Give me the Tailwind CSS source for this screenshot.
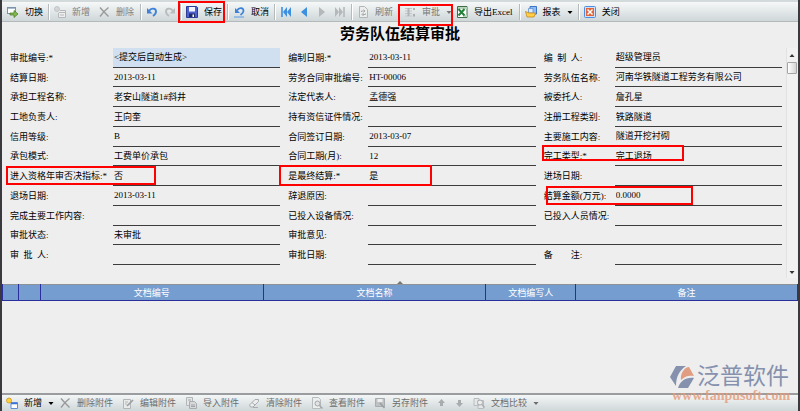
<!DOCTYPE html>
<html lang="zh-CN">
<head>
    <meta charset="UTF-8">
    <meta name="viewport" content="width=device-width, initial-scale=1.0">
    <title>劳务队伍结算审批</title>
    <script src="https://cdn.jsdelivr.net/npm/@tailwindcss/browser@4"></script>
</head>
<body class="bg-[#eeeeee] font-['Liberation_Serif','Noto_Sans_CJK_SC',sans-serif] text-[9px] leading-3 text-black">

    <!-- Icons -->
    <svg class="hidden">
        <symbol id="i-switch" viewBox="0 0 12 12"><rect x="0.5" y="1.5" width="8" height="6" fill="#fff" stroke="#7d92a8"/><path d="M1 2.5h7" stroke="#a9bccd"/><path d="M3 7h4V4.5L11 8l-4 3.5V9H3z" fill="#86b84a" stroke="#41762a" stroke-width=".7"/></symbol>
        <symbol id="i-new" viewBox="0 0 12 12"><path d="M6 4.5h5.5v7H4.5V7" fill="#eee" stroke="#b4b8bb"/><path d="M5 6.500h6M6 9h4" stroke="#b4b8bb"/><circle cx="3" cy="3" r="2.500" fill="#d4d6d8" stroke="#b0b4b8" stroke-width=".6"/></symbol>
        <symbol id="i-newc" viewBox="0 0 12 12"><path d="M5 5.500h6.500v6H5z" fill="#fff" stroke="#5f8fd6"/><path d="M5 6.500h6.500" stroke="#3a74d0" stroke-width="1.500"/><circle cx="3" cy="3.500" r="2.500" fill="#ffd23c" stroke="#c98a12" stroke-width=".7"/></symbol>
        <symbol id="i-x" viewBox="0 0 12 12"><path d="M2 1.500Q5 5 10.500 10.500M10.500 1.500Q6 5 2 10.500" fill="none" stroke="#9a9a9a" stroke-width="1.400"/></symbol>
        <symbol id="i-undo" viewBox="0 0 12 12"><path d="M3 5C5 1.500 10 2 10 5.500c0 2-1.500 3.500-3 4.500" fill="none" stroke="#3d82d8" stroke-width="1.900"/><path d="M1 2v5.500h5.500z" fill="#3d82d8"/></symbol>
        <symbol id="i-redo" viewBox="0 0 12 12"><path d="M9 5C7 1.500 2 2 2 5.500c0 2 1.500 3.500 3 4.500" fill="none" stroke="#b9bcbe" stroke-width="1.900"/><path d="M11 2v5.500H5.500z" fill="#b9bcbe"/></symbol>
        <symbol id="i-cancel" viewBox="0 0 12 12"><path d="M4 4.500C6 1 10.500 1.500 10.500 5c0 2-1.500 3-3 4" fill="none" stroke="#3d82d8" stroke-width="1.700"/><path d="M2 2v5h5z" fill="#3d82d8"/><path d="M1 11h10" stroke="#6fa6e6" stroke-width="1.200"/></symbol>
        <symbol id="i-save" viewBox="0 0 12 12"><path d="M.5.5h10l1 1v10H.5z" fill="#4d62cf" stroke="#2c3b98"/><path d="M3 1h6v4.500H3z" fill="#f2f5ff"/><path d="M3 7.500h6V11H3z" fill="#1f2b66"/><path d="M6.500 8.500h1.500V11H6.500z" fill="#fff"/></symbol>
        <symbol id="i-first" viewBox="0 0 12 12"><path d="M2 1v10" stroke="#3d8fe0" stroke-width="1.600"/><path d="M7 1v10L3 6zM11 1v10L7 6z" fill="#3d8fe0"/></symbol>
        <symbol id="i-prev" viewBox="0 0 12 12"><path d="M9 1v10L3 6z" fill="#3d8fe0"/></symbol>
        <symbol id="i-next" viewBox="0 0 12 12"><path d="M3 1v10l6-5z" fill="#b5b8ba"/></symbol>
        <symbol id="i-last" viewBox="0 0 12 12"><path d="M10 1v10" stroke="#b5b8ba" stroke-width="1.600"/><path d="M1 1v10l4-5zM5 1v10l4-5z" fill="#b5b8ba"/></symbol>
        <symbol id="i-refresh" viewBox="0 0 12 12"><path d="M2.500.5h5l3 3v8h-8z" fill="#eceeee" stroke="#b3b6b8"/><path d="M4.500 6V5h3M6.500 3.500 8 5 6.500 6.500M8.500 7.500v1h-3M6.500 7 5 8.500 6.500 10" fill="none" stroke="#9da1a3" stroke-width=".9"/></symbol>
        <symbol id="i-approve" viewBox="0 0 12 12"><path d="M1 2.500h7M1 5h7M1 7.500h7M1 10h7" stroke="#c3c6c8" stroke-width="1.200"/><path d="M4.500 2v8" stroke="#b1b4b6" stroke-width="2"/><path d="M10 2v2M10 8v2.500" stroke="#999" stroke-width="1.400"/></symbol>
        <symbol id="i-excel" viewBox="0 0 12 12"><path d="M1.500.5h9.500v11H1.500z" fill="#fff" stroke="#3e6e46"/><path d="M2 1h9v2H2zM7 9h4v2H7z" fill="#b8d5bb"/><path d="m2.500 3 6 6.500M8.500 3l-6 6.500" stroke="#23803a" stroke-width="2"/></symbol>
        <symbol id="i-report" viewBox="0 0 12 12"><path d="M5 .5h6.500V8H5z" fill="#8fbcf4" stroke="#3d74c4"/><path d="M3.500 2.500H8V7H3.500z" fill="#dbe9fb" stroke="#5f8fd6" stroke-width=".8"/><path d="M.5 5.500 4 7h6.500L9 11H2z" fill="#ffcf4a" stroke="#c58a1a" stroke-width=".8"/></symbol>
        <symbol id="i-close" viewBox="0 0 12 12"><rect x=".5" y=".5" width="11" height="11" rx="1" fill="#cfe2fa" stroke="#4f8ce0"/><path d="M2 2h8v8H2z" fill="#e2643a"/><path d="m3.500 3.500 5 5M8.500 3.500l-5 5" stroke="#fff" stroke-width="1.500"/></symbol>
        <symbol id="i-edit" viewBox="0 0 12 12"><path d="M1.500 2.500h7v9h-7z" fill="#e9ebeb" stroke="#b3b6b8"/><path d="M3 5h3M3 7h2" stroke="#b3b6b8"/><path d="m5 9 6-6" stroke="#9c9fa1" stroke-width="1.700"/></symbol>
        <symbol id="i-import" viewBox="0 0 12 12"><path d="M1.500.5h6v8h-6z" fill="#e4e6e7" stroke="#b3b6b8"/><path d="M4.500 4.500h5l2 2v5h-7z" fill="#d6d8da" stroke="#a9acae"/><path d="M3 3h3M6 8h4M6 9.500h4" stroke="#a2a5a7"/></symbol>
        <symbol id="i-clear" viewBox="0 0 12 12"><path d="m1.500 8 5.500-5.500h3.500v2L5 10H2.500z" fill="#eceeee" stroke="#a9acae"/><path d="M5 10.500h5M4 5.500l3 2.500" stroke="#a9acae"/></symbol>
        <symbol id="i-view" viewBox="0 0 12 12"><path d="M1.500.5h6l2 2v9h-8z" fill="#eceeee" stroke="#b9bcbe"/><circle cx="6.500" cy="6.500" r="2.500" fill="#dfe3e5" stroke="#a5a8aa"/><path d="m8.500 8.500 3 3" stroke="#a5a8aa" stroke-width="1.500"/></symbol>
        <symbol id="i-saveas" viewBox="0 0 12 12"><path d="M1.500 1.500h9v8h-9z" fill="#bfc2c4" stroke="#a9acae"/><path d="M3.500 2h5v3h-5z" fill="#eee"/><path d="m6 6 4.500 5" stroke="#9a9d9f" stroke-width="1.500"/></symbol>
        <symbol id="i-up" viewBox="0 0 9 12"><path d="M4.500 2 8 6H6v3H3V6H1z" fill="#a9acae"/></symbol>
        <symbol id="i-down" viewBox="0 0 9 12"><path d="M4.500 10 8 6H6V3H3v3H1z" fill="#a9acae"/></symbol>
        <symbol id="i-compare" viewBox="0 0 12 12"><path d="M1 1.500h5v7H1zM5 3.500h5.500v8H5z" fill="#e4e6e7" stroke="#b9bcbe"/><circle cx="7" cy="5.500" r="2.500" fill="#eceeee" stroke="#a9acae"/><path d="m9 7.500 2.500 3" stroke="#a9acae" stroke-width="1.300"/></symbol>
        <symbol id="i-caret" viewBox="0 0 6 12"><path d="M.5 5h5L3 8z" fill="currentColor"/></symbol>
    </svg>

    <div class="relative flex min-h-screen flex-col border-r-2 border-l-2 border-[#3a3a3e]">

        <!-- Toolbar -->
        <header class="flex h-[22px] items-center border-t-2 border-b border-t-[#d3dadc] border-b-[#b4babc] bg-linear-to-b from-[#f6f8f8] to-[#cfd7d9] pl-px whitespace-nowrap">
            <div class="flex items-center pr-[5px] pl-1">
                <button class="flex items-center gap-1.5"><svg class="size-3"><use href="#i-switch"/></svg>切换</button>
            </div>
            <i class="h-4 w-0.5 border-r border-l border-r-white border-l-[#b5bbbd]"></i>
            <div class="flex items-center gap-2 pr-1.5 pl-1 text-[#808080]">
                <button class="flex items-center gap-1.5"><svg class="size-3"><use href="#i-new"/></svg>新增</button>
                <button class="flex items-center gap-1.5"><svg class="size-3"><use href="#i-x"/></svg>删除</button>
            </div>
            <i class="h-4 w-0.5 border-r border-l border-r-white border-l-[#b5bbbd]"></i>
            <div class="flex items-center gap-1.5 pr-1 pl-1">
                <button aria-label="撤销"><svg class="size-3"><use href="#i-undo"/></svg></button>
                <button aria-label="重做"><svg class="size-3"><use href="#i-redo"/></svg></button>
            </div>
            <i class="h-4 w-0.5 border-r border-l border-r-white border-l-[#b5bbbd]"></i>
            <div class="flex items-center pr-[5px] pl-1">
                <button class="relative flex items-center gap-1.5"><svg class="size-3"><use href="#i-save"/></svg>保存
                    <span class="pointer-events-none absolute top-[-5px] -left-2 h-[22px] w-[47px] border-2 border-[#f00]"></span>
                </button>
            </div>
            <i class="h-4 w-0.5 border-r border-l border-r-white border-l-[#b5bbbd]"></i>
            <div class="flex items-center pr-[5px] pl-1">
                <button class="flex items-center gap-1.5"><svg class="size-3"><use href="#i-cancel"/></svg>取消</button>
            </div>
            <i class="h-4 w-0.5 border-r border-l border-r-white border-l-[#b5bbbd]"></i>
            <div class="flex items-center gap-1.5 pr-[5px] pl-1">
                <button aria-label="首条"><svg class="size-3"><use href="#i-first"/></svg></button>
                <button aria-label="上一条"><svg class="size-3"><use href="#i-prev"/></svg></button>
                <button aria-label="下一条"><svg class="size-3"><use href="#i-next"/></svg></button>
                <button aria-label="末条"><svg class="size-3"><use href="#i-last"/></svg></button>
            </div>
            <i class="h-4 w-0.5 border-r border-l border-r-white border-l-[#b5bbbd]"></i>
            <div class="flex items-center pr-[5px] pl-1 text-[#777]">
                <button class="flex items-center gap-1.5"><svg class="size-3"><use href="#i-refresh"/></svg>刷新</button>
            </div>
            <i class="h-4 w-0.5 border-r border-l border-r-white border-l-[#b5bbbd]"></i>
            <div class="flex items-center gap-1 pr-1.5 pl-1">
                <button class="relative flex items-center gap-1.5 text-[#777]"><svg class="size-3"><use href="#i-approve"/></svg>审批<svg class="h-3 w-1.5"><use href="#i-caret"/></svg>
                    <span class="pointer-events-none absolute -top-0.5 -left-1.5 h-[22px] w-[55px] border-2 border-[#f00]"></span>
                </button>
                <button class="flex items-center gap-1.5"><svg class="size-3"><use href="#i-excel"/></svg>导出Excel</button>
            </div>
            <i class="h-4 w-0.5 border-r border-l border-r-white border-l-[#b5bbbd]"></i>
            <div class="flex items-center pr-[5px] pl-1">
                <button class="flex items-center gap-1.5"><svg class="size-3"><use href="#i-report"/></svg>报表<svg class="h-3 w-1.5"><use href="#i-caret"/></svg></button>
            </div>
            <i class="h-4 w-0.5 border-r border-l border-r-white border-l-[#b5bbbd]"></i>
            <div class="flex items-center pl-1">
                <button class="flex items-center gap-1.5"><svg class="size-3"><use href="#i-close"/></svg>关闭</button>
            </div>
        </header>

        <!-- Form -->
        <main class="flex flex-1 flex-col">
            <h1 class="mt-1 text-center text-[15px] leading-4 font-bold">劳务队伍结算审批</h1>
            <div class="mt-1.5 flex">
                <form id="form" class="grid h-[217px] flex-1 grid-cols-[103px_minmax(0,1fr)_88px_minmax(0,1fr)_79px_minmax(0,1fr)] grid-rows-11 pl-2"></form>
                <!-- Scrollbar -->
                <div class="mr-px ml-1 flex h-[230px] w-[11px] flex-col items-center border-l border-[#e2e2e2] bg-[#f1f1f1]">
                    <svg class="mt-0.5 h-3 w-1.5 rotate-180 text-[#333]"><use href="#i-caret"/></svg>
                    <span class="h-3 w-full rounded-[1px] border border-[#a5a5a5] bg-linear-to-r from-white to-[#d4d4d4]"></span>
                    <svg class="mt-auto h-3 w-1.5 text-[#333]"><use href="#i-caret"/></svg>
                </div>
            </div>
            <div class="-mt-px flex h-[7px] items-end justify-center"><svg class="h-1 w-1.5" viewBox="0 0 6 4"><path d="M0 4h6L3 1z" fill="#777"/></svg></div>

            <!-- Attachments -->
            <table class="w-full table-fixed border-collapse border-t border-[#8d9296] text-white">
                <thead>
                    <tr class="h-4 bg-[#769dd0] *:border *:border-t-0 *:border-[#2a2f9c] *:p-0 *:font-normal">
                        <th class="w-4"></th>
                        <th class="w-[22px]"></th>
                        <th class="w-[28%]">文档编号</th>
                        <th class="w-[28%]">文档名称</th>
                        <th class="w-[90px]">文档编写人</th>
                        <th>备注</th>
                    </tr>
                </thead>
            </table>
        </main>

        <!-- Attachment toolbar -->
        <footer class="flex h-[18px] items-center gap-[9px] border-t-2 border-[#9a9d9f] bg-linear-to-b from-[#f4f6f6] to-[#cfd7d9] pl-1 whitespace-nowrap text-[#6c6c6c]">
            <button class="-mr-1 flex items-center gap-1.5 text-black"><svg class="size-3"><use href="#i-newc"/></svg>新增<svg class="h-3 w-1.5"><use href="#i-caret"/></svg></button>
            <button class="flex items-center gap-1.5"><svg class="size-3"><use href="#i-x"/></svg>删除附件</button>
            <button class="flex items-center gap-1.5"><svg class="size-3"><use href="#i-edit"/></svg>编辑附件</button>
            <button class="flex items-center gap-1.5"><svg class="size-3"><use href="#i-import"/></svg>导入附件</button>
            <button class="flex items-center gap-1.5"><svg class="size-3"><use href="#i-clear"/></svg>清除附件</button>
            <button class="flex items-center gap-1.5"><svg class="size-3"><use href="#i-view"/></svg>查看附件</button>
            <button class="flex items-center gap-1.5"><svg class="size-3"><use href="#i-saveas"/></svg>另存附件</button>
            <button aria-label="上移"><svg class="h-3 w-[9px]"><use href="#i-up"/></svg></button>
            <button aria-label="下移"><svg class="h-3 w-[9px]"><use href="#i-down"/></svg></button>
            <button class="flex items-center gap-1.5"><svg class="size-3"><use href="#i-compare"/></svg>文档比较<svg class="h-3 w-1.5"><use href="#i-caret"/></svg></button>
        </footer>

        <!-- Watermark -->
        <div class="pointer-events-none absolute right-2 bottom-2 w-[120px] opacity-80">
            <div class="flex items-center gap-0.5 text-[23px] leading-6 text-[#6b7a9e]">
                <svg class="h-[23px] w-[25px]" viewBox="0 0 25 23"><path d="M6 0h10C10 4 6 10 6 20L0 11z" fill="#6b7a9e"/><path d="M11 14C10 7 15 1 19 1l5 9c-5-1-9 0-13 4z" fill="#dd8a66"/><path d="M8 22c2-7 8-11 16-10l-6 10z" fill="#6b7a9e"/></svg>
                泛普软件
            </div>
            <div class="pl-0.5 text-[14px] leading-[14px] font-bold text-[#e59a78]">www.fanpusoft.com</div>
        </div>
    </div>

    <script>
        // [label, value, extra classes for the marker box]
        const rows = [
            [['审批编号:*', '<提交后自动生成>'], ['编制日期:*', '2013-03-11'], ['编\u00a0\u00a0制\u00a0\u00a0人:', '超级管理员']],
            [['结算日期:', '2013-03-11'], ['劳务合同审批编号:', 'HT-00006'], ['劳务队伍名称:', '河南华铁隧道工程劳务有限公司']],
            [['承担工程名称:', '老安山隧道1#斜井'], ['法定代表人:', '孟德强'], ['被委托人:', '詹孔星']],
            [['工地负责人:', '王向奎'], ['持有资信证件情况:', ''], ['注册工程类别:', '铁路隧道']],
            [['信用等级:', 'B'], ['合同签订日期:', '2013-03-07'], ['主要施工内容:', '隧道开挖衬砌']],
            [['承包模式:', '工费单价承包'], ['合同工期(月):', '12'], ['完工类型:*', '完工退场', '-top-0.5 left-1.5 h-4 w-[142px]']],
            [['进入资格年审否决指标:*', '否', 'top-0 -left-1 h-[19px] w-[150px]'], ['是最终结算:*', '是', '-top-px -left-px h-[21px] w-[153px]'], ['进场日期:', '']],
            [['退场日期:', '2013-03-11'], ['辞退原因:', ''], ['结算金额(万元):', '0.0000', 'top-0 left-2.5 h-[19px] w-[147px]']],
            [['完成主要工作内容:', ''], ['已投入设备情况:', ''], ['已投入人员情况:', '']],
            [['审批状态:', '未审批'], ['审批意见:', '']],
            [['审\u00a0\u00a0批\u00a0\u00a0人:', ''], ['审批日期:', ''], ['备\u3000\u3000注:', '']],
        ];

        const form = document.getElementById('form');
        rows.forEach((row, r) => {
            row.forEach(([text, value, mark], c) => {
                const id = `f${r}-${c}`;

                const label = document.createElement('label');
                label.htmlFor = id;
                label.className = c ? 'relative flex items-center pl-2 whitespace-nowrap' : 'relative flex items-center whitespace-nowrap';
                label.textContent = text;
                if (mark) {
                    const box = document.createElement('span');
                    box.className = 'pointer-events-none absolute z-10 border-2 border-[#f00] ' + mark;
                    label.appendChild(box);
                }

                const input = document.createElement('input');
                input.id = id;
                input.value = value;
                input.className = 'min-w-0 border-b border-[#3c3c3c] pl-px outline-none';
                if (r === 0 && c === 0) input.classList.add('bg-[#d0e0f0]');
                if (row.length === 2 && c === 1) input.classList.add('col-span-3');

                form.append(label, input);
            });
        });
    </script>
</body>
</html>
